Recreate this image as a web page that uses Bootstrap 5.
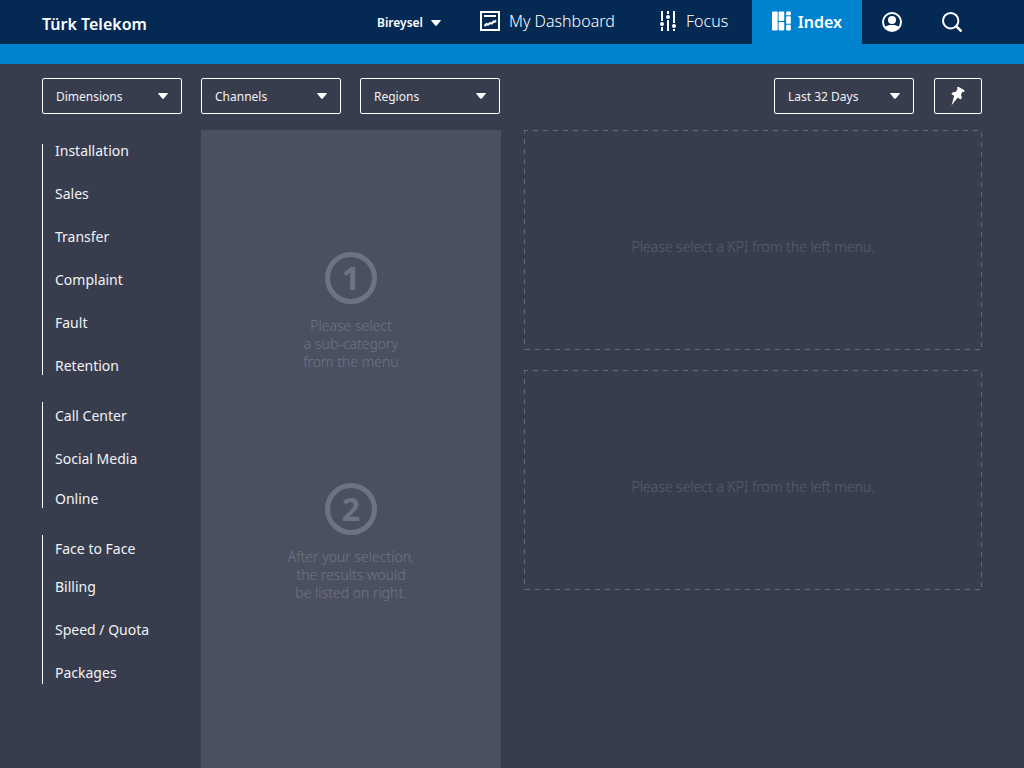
<!DOCTYPE html>
<html lang="en">
<head>
<meta charset="utf-8">
<meta name="viewport" content="width=device-width, initial-scale=1">
<title>Türk Telekom – Index</title>
<link rel="stylesheet" href="https://cdn.jsdelivr.net/npm/bootstrap@5.3.0/dist/css/bootstrap.min.css">
<style>
  :root { --navy: #042a54; --sky: #0083cf; --slate: #383d4d; --panel: #4b5060; }
  body { background: var(--slate); color: #fff; font-family: "Noto Sans", "Open Sans", sans-serif; font-size: 14px; line-height: 18px; }
  .gutter { padding-left: 42px; padding-right: 42px; }
  .topbar { background: var(--navy); border-bottom: 20px solid var(--sky); height: 64px; }
  .brand { font-size: 16px; font-weight: 600; padding-top: 4px; }
  .segment { color: #fff; font-size: 12px; font-weight: 600; gap: 8px; margin-right: 19px; padding: 2px 0 0; }
  .tab { color: #fff; font-size: 16px; font-weight: 300; height: 44px; padding: 0 20px 2px; gap: 9px; }
  .tab:hover { color: #fff; }
  .tab-wide { width: 180px; }
  .tab-mid { width: 112px; }
  .tab-index { background: var(--sky); width: 110px; font-weight: 600; gap: 7px; }
  .tab-index span { padding-top: 2px; }
  .tab-icon { padding-bottom: 0; }
  .filters { padding-top: 14px; padding-bottom: 16px; }
  .filter-set { gap: 19px; }
  .filter { width: 140px; height: 36px; border: 1px solid #fff; border-radius: 2px; color: #f2f2f5; font-size: 12px; padding: 1px 32px 0 13px;
    background: transparent url("data:image/svg+xml,%3Csvg xmlns='http://www.w3.org/2000/svg' width='10' height='6'%3E%3Cpath d='M.6 0h8.8q.9 0 .3.8L5.8 5.4q-.8.9-1.6 0L.3.8Q-.3 0 .6 0z' fill='%23fff'/%3E%3C/svg%3E") no-repeat right 13px top 14px / 10px 6px; }
  .filter option { color: #000; }
  .pin { width: 48px; height: 36px; border: 1px solid #fff; border-radius: 2px; margin-left: 20px; }
  .side { width: 159px; padding-top: 14px; gap: 27px; }
  .group { border-left: 1px solid #fff; padding: 7px 0 2px 12px; }
  .group-first { padding-top: 0; }
  .group-last { padding-bottom: 4px; }
  .group a { display: block; color: #f2f2f5; line-height: 14px; text-decoration: none; }
  .group a + a { margin-top: 29px; }
  .group a.near { margin-top: 26px; }
  .group a.nearest { margin-top: 24px; }
  .steps { width: 300px; background: var(--panel); padding: 122px 0 160px; gap: 112px; color: #717584; font-size: 14px; font-weight: 300; }
  .step-no { width: 52px; height: 52px; border: 5px solid #6f7380; border-radius: 50%; color: #6f7380; font-size: 32px; font-weight: 700; margin-bottom: 13px; }
  .slots { padding-left: 23px; gap: 20px; }
  .slot { height: 220px; color: #5a5f6f; font-size: 14px; font-weight: 300; padding-top: 14px;
    --h: linear-gradient(90deg, #646979 5px, transparent 5px); --v: linear-gradient(#646979 5px, transparent 5px);
    background: var(--h) -1px 0 / 10px 1px repeat-x, var(--h) 1px 100% / 10px 1px repeat-x,
      var(--v) 0 -1px / 1px 10px repeat-y, var(--v) 100% 2px / 1px 10px repeat-y; }
</style>
</head>
<body class="d-flex flex-column min-vh-100">
<header class="topbar gutter d-flex align-items-start">
  <a class="brand d-flex align-items-center align-self-center me-auto text-white text-decoration-none" href="#">Türk Telekom</a>
  <nav class="d-flex align-items-center" aria-label="Main">
    <button class="segment btn border-0 d-flex align-items-center" type="button">Bireysel
      <svg width="10" height="6" fill="#fff" aria-hidden="true"><path d="M.6 0h8.8q.9 0 .3.8L5.8 5.4q-.8.9-1.6 0L.3.8Q-.3 0 .6 0z"/></svg>
    </button>
    <a class="tab tab-wide d-flex align-items-center text-decoration-none text-nowrap" href="#">
      <svg width="20" height="20" viewBox="0 0 20 20" fill="none" stroke="#fff" stroke-width="2" aria-hidden="true"><path d="M1 1h18v18H1zM4 5h12"/><path d="M4.500 15l2-2 1.500.7 2-1.700 1.700.5 2-2 1 .3 1.300-1.500"/></svg>
      My Dashboard</a>
    <a class="tab tab-mid d-flex align-items-center text-decoration-none" href="#">
      <svg width="17" height="20" viewBox="0 0 17 20" fill="#fff" aria-hidden="true"><path d="M1 0h2v10H1zM1 16h2v4H1zM7 0h2v3H7zM7 9h2v11H7zM13 0h2v12h-2zM13 18h2v2h-2z"/><circle cx="2" cy="13" r="2"/><circle cx="8" cy="6" r="2"/><circle cx="14" cy="15" r="2"/></svg>
      Focus</a>
    <a class="tab tab-index d-flex align-items-center text-decoration-none" href="#" aria-current="page">
      <svg width="20" height="20" viewBox="0 0 20 20" fill="#fff" aria-hidden="true"><rect width="6" height="20" rx="1"/><rect x="7" width="6" height="10" rx="1"/><rect x="7" y="11" width="6" height="9" rx="1"/><rect x="15" width="5" height="4" rx="1"/><rect x="15" y="5" width="5" height="8" rx="1"/><rect x="15" y="14" width="5" height="6" rx="1"/></svg>
      <span>Index</span></a>
    <a class="tab tab-icon d-flex align-items-center" href="#" aria-label="Profile">
      <svg width="20" height="20" viewBox="0 0 20 20" aria-hidden="true"><circle cx="10" cy="10" r="9" fill="none" stroke="#fff" stroke-width="2"/><circle cx="10" cy="8" r="4" fill="#fff"/><path d="M3 15.500c1-2 4-2.500 7-2.500s6 .5 7 2.500c-2 3-4.500 3.500-7 3.500s-5-.5-7-3.500z" fill="#fff"/></svg></a>
    <a class="tab tab-icon d-flex align-items-center" href="#" aria-label="Search">
      <svg width="20" height="20" viewBox="0 0 20 20" fill="none" stroke="#fff" aria-hidden="true"><circle cx="8.700" cy="8.700" r="7.700" stroke-width="2"/><path d="M14.300 14.300l4.400 4.400" stroke-width="2.600" stroke-linecap="round"/></svg></a>
  </nav>
</header>

<div class="filters gutter d-flex">
  <div class="filter-set d-flex">
    <select class="filter form-select" aria-label="Dimensions"><option>Dimensions</option></select>
    <select class="filter form-select" aria-label="Channels"><option>Channels</option></select>
    <select class="filter form-select" aria-label="Regions"><option>Regions</option></select>
  </div>
  <select class="filter form-select ms-auto" aria-label="Period"><option>Last 32 Days</option></select>
  <button class="pin btn p-0 d-flex align-items-center justify-content-center" type="button" aria-label="Pin">
    <svg width="14" height="20" viewBox="0 0 14 20" fill="#fff" aria-hidden="true"><path d="M6.300 1.200Q6.900.5 7.700.9l5.400 3.200q.8.600.3 1.300-.9 1-2.200.6L9.900 9q1.300 1.600.6 3.500-.5 1-1.400.5L6.600 11.700.6 19.200l2.600-9.400L1 8.500q-.8-.6-.3-1.300 1.300-1.500 3.900-1.200l2.100-2.900q-1-.8-.4-1.900z"/></svg>
  </button>
</div>

<main class="gutter d-flex flex-grow-1">
  <nav class="side d-flex flex-column flex-shrink-0" aria-label="Categories">
    <div class="group group-first">
      <a href="#">Installation</a><a href="#">Sales</a><a href="#">Transfer</a><a href="#">Complaint</a><a href="#">Fault</a><a href="#">Retention</a>
    </div>
    <div class="group">
      <a href="#">Call Center</a><a href="#">Social Media</a><a class="near" href="#">Online</a>
    </div>
    <div class="group group-last">
      <a href="#">Face to Face</a><a class="nearest" href="#">Billing</a><a href="#">Speed / Quota</a><a href="#">Packages</a>
    </div>
  </nav>
  <section class="steps d-flex flex-column flex-shrink-0 text-center">
    <div><div class="step-no d-flex align-items-center justify-content-center mx-auto">1</div>Please select<br>a sub-category<br>from the menu</div>
    <div><div class="step-no d-flex align-items-center justify-content-center mx-auto">2</div>After your selection,<br>the results would<br>be listed on right.</div>
  </section>
  <section class="slots d-flex flex-column flex-grow-1">
    <div class="slot d-flex align-items-center justify-content-center">Please select a KPI from the left menu.</div>
    <div class="slot d-flex align-items-center justify-content-center">Please select a KPI from the left menu.</div>
  </section>
</main>
<script src="https://cdn.jsdelivr.net/npm/bootstrap@5.3.0/dist/js/bootstrap.bundle.min.js"></script>
</body>
</html>
